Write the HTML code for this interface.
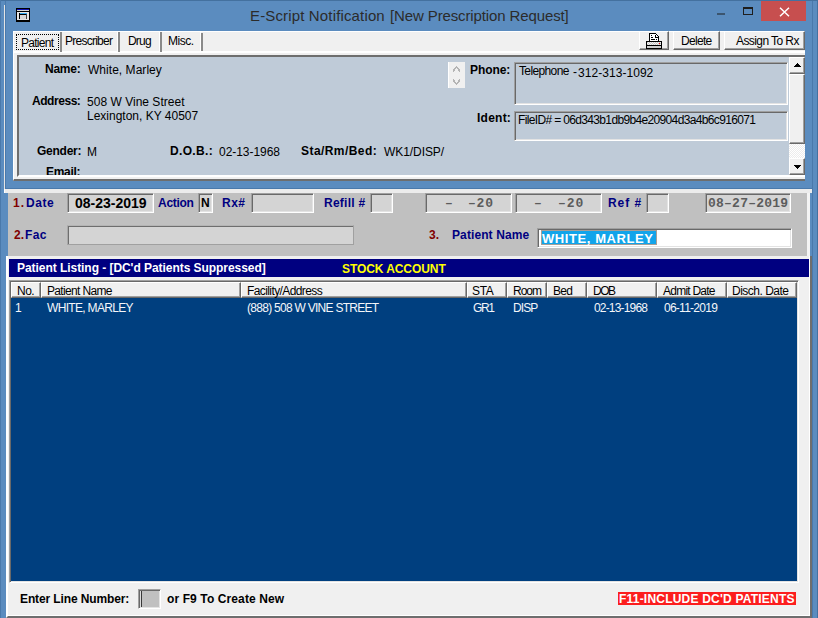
<!DOCTYPE html>
<html><head><meta charset="utf-8">
<style>
*{margin:0;padding:0;box-sizing:border-box}
html,body{width:818px;height:618px;overflow:hidden;background:#5b8cbf;font-family:"Liberation Sans",sans-serif;font-size:11px;color:#000}
.a{position:absolute}
.t{position:absolute;white-space:nowrap;line-height:1}
.b{font-weight:bold}
.p{font-size:12px}
.sunk{position:absolute;border-style:solid;border-width:1px;border-color:#a0a0a0 #fff #fff #a0a0a0;box-shadow:inset 1px 1px 0 #696969,inset -1px -1px 0 #e3e3e3}
.btn{position:absolute;background:#f0f0f0;border:1px solid;border-color:#fff #696969 #696969 #fff;box-shadow:inset -1px -1px 0 #a0a0a0}
.hd{position:absolute;top:282px;height:16px;background:#f0f0f0;border-style:solid;border-width:1px;border-color:#fff #696969 #696969 #fff;box-shadow:inset -1px -1px 0 #a0a0a0}
.nv{color:#000080}
.rd{color:#800000}
.mono{font-family:"Liberation Mono",monospace;font-size:13px;color:#5c5c5c;white-space:pre}
.bd{color:#f4f6fa}
</style></head><body>
<!-- main window frame -->
<div class="a" style="left:4px;top:5px;width:1px;height:184px;background:#e4e4e4"></div>

<!-- dialog frame -->
<div class="a" style="left:5px;top:0;width:808px;height:189px;background:#5b8cbf;border:1px solid #4a79ab"></div>
<div class="t" style="left:250px;top:8px;font-size:15px;color:#2b2b2b;letter-spacing:0.15px">E-Script Notification</div>
<div class="t" style="left:390px;top:8px;font-size:15px;color:#2b2b2b;letter-spacing:-0.12px">[New Prescription Request]</div>
<!-- sys icon -->
<svg class="a" style="left:16px;top:8px" width="14" height="14" viewBox="0 0 14 14" shape-rendering="crispEdges">
<rect x="0" y="0" width="14" height="14" fill="#000"/>
<rect x="1" y="1" width="12" height="1" fill="#1010b0"/>
<rect x="1" y="2" width="12" height="1" fill="#d8d8d8"/>
<rect x="1" y="4" width="12" height="8" fill="#e6e6e6"/>
<rect x="3" y="5" width="1" height="6" fill="#000"/>
<rect x="4" y="5" width="7" height="1" fill="#30a8f0"/>
<rect x="4" y="6" width="7" height="1" fill="#000"/>
<rect x="4" y="7" width="6" height="4" fill="#d8d8d8"/>
<rect x="10" y="6" width="1" height="5" fill="#404040"/>
</svg>
<!-- min/max/close -->
<div class="a" style="left:717px;top:13px;width:8px;height:2px;background:#3b556f"></div>
<div class="a" style="left:743px;top:7px;width:10px;height:8px;border:1px solid #1e1e1e;border-top-width:2px"></div>
<div class="a" style="left:761px;top:1px;width:45px;height:20px;background:#c74f4f"></div>
<svg class="a" style="left:779px;top:7px" width="11" height="10" viewBox="0 0 11 10"><path d="M1 0.8 L10 9.2 M10 0.8 L1 9.2" stroke="#fff" stroke-width="1.5"/></svg>

<!-- dialog client -->
<div class="a" style="left:13px;top:31px;width:792px;height:150px;background:#f0f0f0;border-top:1px solid #fff;border-left:1px solid #fff;border-bottom:2px solid #6e6e6e"></div>
<div class="a" style="left:14px;top:51px;width:791px;height:2px;background:#fff"></div>

<!-- tabs -->
<div class="a" style="left:16px;top:34px;width:43px;height:16px;border:1px dotted #000"></div>
<div class="t" style="left:21px;top:37px;letter-spacing:-0.73px;font-size:12px">Patient</div>
<div class="a" style="left:60px;top:32px;width:2px;height:20px;background:#8a8a8a"></div>
<div class="t" style="left:65px;top:35px;letter-spacing:-0.75px;font-size:12px">Prescriber</div>
<div class="a" style="left:117px;top:32px;width:1px;height:20px;background:#fff"></div>
<div class="a" style="left:118px;top:32px;width:2px;height:20px;background:#8a8a8a"></div>
<div class="t" style="left:128px;top:35px;letter-spacing:-0.80px;font-size:12px">Drug</div>
<div class="a" style="left:159px;top:32px;width:1px;height:20px;background:#fff"></div>
<div class="a" style="left:160px;top:32px;width:2px;height:20px;background:#8a8a8a"></div>
<div class="t" style="left:168px;top:35px;letter-spacing:-0.50px;font-size:12px">Misc.</div>
<div class="a" style="left:200px;top:32px;width:1px;height:20px;background:#fff"></div>
<div class="a" style="left:201px;top:33px;width:2px;height:18px;background:#8a8a8a"></div>

<!-- toolbar buttons -->
<div class="btn" style="left:639px;top:31px;width:30px;height:19px"></div>
<svg class="a" style="left:646px;top:33px" width="16" height="16" viewBox="0 0 16 16" shape-rendering="crispEdges"><rect x="4" y="1" width="6" height="7" fill="#fff"/><rect x="10" y="2" width="1" height="6" fill="#fff"/><rect x="11" y="4" width="1" height="4" fill="#fff"/><rect x="9" y="1" width="1" height="1" fill="#fff"/><rect x="3" y="0" width="7" height="1" fill="#000"/><rect x="3" y="0" width="1" height="8" fill="#000"/><rect x="10" y="1" width="1" height="1" fill="#000"/><rect x="11" y="2" width="1" height="1" fill="#000"/><rect x="12" y="3" width="1" height="5" fill="#000"/><rect x="9" y="2" width="1" height="3" fill="#000"/><rect x="10" y="4" width="2" height="1" fill="#000"/><rect x="5" y="2" width="1" height="1" fill="#000"/><rect x="5" y="4" width="2" height="1" fill="#000"/><rect x="5" y="6" width="4" height="1" fill="#000"/><rect x="10" y="6" width="1" height="1" fill="#000"/><rect x="0" y="8" width="16" height="1" fill="#000"/><rect x="0" y="8" width="1" height="8" fill="#000"/><rect x="15" y="8" width="1" height="8" fill="#000"/><rect x="1" y="9" width="14" height="3" fill="#f4f4f4"/><rect x="1" y="9" width="1" height="1" fill="#c8c8c8"/><rect x="3" y="9" width="1" height="1" fill="#c8c8c8"/><rect x="5" y="9" width="1" height="1" fill="#c8c8c8"/><rect x="7" y="9" width="1" height="1" fill="#c8c8c8"/><rect x="9" y="9" width="1" height="1" fill="#c8c8c8"/><rect x="11" y="9" width="1" height="1" fill="#c8c8c8"/><rect x="13" y="9" width="1" height="1" fill="#c8c8c8"/><rect x="2" y="10" width="1" height="1" fill="#c8c8c8"/><rect x="4" y="10" width="1" height="1" fill="#c8c8c8"/><rect x="6" y="10" width="1" height="1" fill="#c8c8c8"/><rect x="8" y="10" width="1" height="1" fill="#c8c8c8"/><rect x="10" y="10" width="1" height="1" fill="#c8c8c8"/><rect x="12" y="10" width="1" height="1" fill="#c8c8c8"/><rect x="14" y="10" width="1" height="1" fill="#c8c8c8"/><rect x="1" y="11" width="1" height="1" fill="#c8c8c8"/><rect x="3" y="11" width="1" height="1" fill="#c8c8c8"/><rect x="5" y="11" width="1" height="1" fill="#c8c8c8"/><rect x="7" y="11" width="1" height="1" fill="#c8c8c8"/><rect x="9" y="11" width="1" height="1" fill="#c8c8c8"/><rect x="11" y="11" width="1" height="1" fill="#c8c8c8"/><rect x="13" y="11" width="1" height="1" fill="#c8c8c8"/><rect x="13" y="10" width="1" height="1" fill="#f00"/><rect x="0" y="12" width="16" height="1" fill="#000"/><rect x="1" y="13" width="14" height="2" fill="#d0d0d0"/><rect x="1" y="15" width="14" height="1" fill="#000"/></svg>
<div class="btn" style="left:673px;top:31px;width:47px;height:19px"></div>
<div class="t" style="left:681px;top:35px;letter-spacing:-0.68px;font-size:12px">Delete</div>
<div class="btn" style="left:724px;top:31px;width:81px;height:19px"></div>
<div class="t" style="left:736px;top:35px;letter-spacing:-0.58px;font-size:12px">Assign To Rx</div>

<!-- panel -->
<div class="a" style="left:17px;top:55px;width:788px;height:122px;background:#bfcbd8;border-top:2px solid #6e6e6e;border-left:2px solid #6e6e6e;border-bottom:2px solid #fff"></div>
<div class="t b p" style="left:45px;top:63px;letter-spacing:-0.25px">Name:</div>
<div class="t p" style="left:88px;top:64px;letter-spacing:0.04px">White, Marley</div>
<div class="t b p" style="left:32px;top:95px;letter-spacing:-0.45px">Address:</div>
<div class="t p" style="left:87px;top:96px;letter-spacing:0.02px">508 W Vine Street</div>
<div class="t p" style="left:87px;top:110px;letter-spacing:0.00px">Lexington, KY 40507</div>
<div class="t b p" style="left:37px;top:145px;letter-spacing:-0.26px">Gender:</div>
<div class="t p" style="left:87px;top:146px;letter-spacing:0px">M</div>
<div class="t b p" style="left:170px;top:145px;letter-spacing:0.33px">D.O.B.:</div>
<div class="t p" style="left:219px;top:146px;letter-spacing:-0.04px">02-13-1968</div>
<div class="t b p" style="left:301px;top:145px;letter-spacing:0.44px">Sta/Rm/Bed:</div>
<div class="t p" style="left:384px;top:146px;letter-spacing:-0.07px">WK1/DISP/</div>
<div class="a" style="left:19px;top:57px;width:770px;height:118px;overflow:hidden">
<div class="t b p" style="left:27px;top:109px;letter-spacing:-0.32px">Email:</div>
</div>
<!-- spinner -->
<div class="a" style="left:448px;top:62px;width:17px;height:26px;background:#f0f0f0;border-left:1px solid #fff"></div>
<svg class="a" style="left:453px;top:66px" width="7" height="19" viewBox="0 0 7 19" shape-rendering="crispEdges" fill="#b4b4b4"><rect x="3" y="0" width="1" height="1"/><rect x="2" y="1" width="1" height="1"/><rect x="3" y="1" width="1" height="1"/><rect x="4" y="1" width="1" height="1"/><rect x="1" y="2" width="1" height="1"/><rect x="2" y="2" width="1" height="1"/><rect x="4" y="2" width="1" height="1"/><rect x="5" y="2" width="1" height="1"/><rect x="0" y="3" width="1" height="1"/><rect x="1" y="3" width="1" height="1"/><rect x="5" y="3" width="1" height="1"/><rect x="6" y="3" width="1" height="1"/><rect x="0" y="4" width="1" height="1"/><rect x="1" y="4" width="1" height="1"/><rect x="5" y="4" width="1" height="1"/><rect x="6" y="4" width="1" height="1"/><rect x="0" y="5" width="1" height="1"/><rect x="6" y="5" width="1" height="1"/><rect x="0" y="13" width="1" height="1"/><rect x="6" y="13" width="1" height="1"/><rect x="0" y="14" width="1" height="1"/><rect x="1" y="14" width="1" height="1"/><rect x="5" y="14" width="1" height="1"/><rect x="6" y="14" width="1" height="1"/><rect x="0" y="15" width="1" height="1"/><rect x="1" y="15" width="1" height="1"/><rect x="5" y="15" width="1" height="1"/><rect x="6" y="15" width="1" height="1"/><rect x="1" y="16" width="1" height="1"/><rect x="2" y="16" width="1" height="1"/><rect x="4" y="16" width="1" height="1"/><rect x="5" y="16" width="1" height="1"/><rect x="2" y="17" width="1" height="1"/><rect x="3" y="17" width="1" height="1"/><rect x="4" y="17" width="1" height="1"/><rect x="3" y="18" width="1" height="1"/></svg>
<div class="t b p" style="left:470px;top:64px;letter-spacing:-0.08px">Phone:</div>
<div class="sunk" style="left:514px;top:62px;width:274px;height:43px"></div>
<div class="t" style="left:519px;top:65px;letter-spacing:-0.63px;font-size:12px">Telephone</div>
<div class="t" style="left:573px;top:66px;font-size:12px;letter-spacing:0px">-</div>
<div class="t p" style="left:578px;top:67px;letter-spacing:0.05px">312-313-1092</div>
<div class="t b p" style="left:477px;top:112px;letter-spacing:0.24px">Ident:</div>
<div class="sunk" style="left:514px;top:111px;width:274px;height:30px"></div>
<div class="t" style="left:518px;top:114px;letter-spacing:-0.65px;font-size:12px">FileID# = 06d343b1db9b4e20904d3a4b6c916071</div>
<!-- scrollbar -->
<div class="a" style="left:789px;top:57px;width:16px;height:118px;background:#f0f0f0;border-left:1px solid #fff"></div>
<div class="btn" style="left:789px;top:57px;width:16px;height:17px"></div>
<svg class="a" style="left:794px;top:63px" width="7" height="4" viewBox="0 0 7 4" shape-rendering="crispEdges"><path d="M3 0h1v1h1v1h1v1h1v1H0V3h1V2h1V1h1z" fill="#000"/></svg>
<div class="btn" style="left:789px;top:74px;width:16px;height:70px"></div>
<div class="a" style="left:789px;top:144px;width:16px;height:14px;background:repeating-conic-gradient(#fff 0 25%,#ececec 0 50%) 0 0/2px 2px"></div>
<div class="btn" style="left:789px;top:158px;width:16px;height:17px"></div>
<svg class="a" style="left:794px;top:165px" width="7" height="4" viewBox="0 0 7 4" shape-rendering="crispEdges"><path d="M0 0h7v1H6v1H5v1H4v1H3V3H2V2H1V1H0z" fill="#000"/></svg>

<!-- light band -->
<div class="a" style="left:4px;top:189px;width:808px;height:4px;background:#ececec;border-left:1px solid #fff"></div>
<!-- form area -->
<div class="a" style="left:0;top:193px;width:8px;height:63px;background:#5b8cbf"></div>
<div class="a" style="left:8px;top:193px;width:799px;height:63px;background:#c0c0c0"></div>
<div class="a" style="left:807px;top:193px;width:3px;height:63px;background:#f4f4f4"></div>

<div class="t b p rd" style="left:13px;top:197px;letter-spacing:1.00px">1.</div>
<div class="t b p nv" style="left:26px;top:197px;letter-spacing:0.53px">Date</div>
<div class="sunk" style="left:67px;top:193px;width:87px;height:20px;background:#d4d4d4"></div>
<div class="t b" style="left:75px;top:196px;font-size:14px;letter-spacing:0.00px">08-23-2019</div>
<div class="t b p nv" style="left:158px;top:197px;letter-spacing:-0.28px">Action</div>
<div class="sunk" style="left:198px;top:193px;width:15px;height:20px;background:#d4d4d4"></div>
<div class="t b p" style="left:201px;top:197px;letter-spacing:0px">N</div>
<div class="t b p nv" style="left:222px;top:197px;letter-spacing:0.50px">Rx#</div>
<div class="sunk" style="left:251px;top:193px;width:63px;height:20px;background:#d4d4d4"></div>
<div class="t b p nv" style="left:324px;top:197px;letter-spacing:0.26px">Refill #</div>
<div class="sunk" style="left:370px;top:193px;width:23px;height:20px;background:#d4d4d4"></div>
<div class="sunk" style="left:425px;top:193px;width:87px;height:20px;background:#d4d4d4"></div>
<div class="t b mono" style="left:445px;top:197px;letter-spacing:0px">–</div>
<div class="t b mono" style="left:468px;top:197px;letter-spacing:0.80px">–20</div>
<div class="sunk" style="left:515px;top:193px;width:87px;height:20px;background:#d4d4d4"></div>
<div class="t b mono" style="left:534px;top:197px;letter-spacing:0px">–</div>
<div class="t b mono" style="left:558px;top:197px;letter-spacing:0.90px">–20</div>
<div class="t b p nv" style="left:608px;top:197px;letter-spacing:0.93px">Ref #</div>
<div class="sunk" style="left:646px;top:193px;width:23px;height:20px;background:#d4d4d4"></div>
<div class="sunk" style="left:705px;top:193px;width:86px;height:20px;background:#d4d4d4"></div>
<div class="t b mono" style="left:708px;top:197px;letter-spacing:0.24px">08–27–2019</div>

<div class="t b p rd" style="left:14px;top:229px;letter-spacing:0.00px">2.</div>
<div class="t b p nv" style="left:25px;top:229px;letter-spacing:0.40px">Fac</div>
<div class="a" style="left:67px;top:225px;width:287px;height:20px;background:#d4d4d4;border-style:solid;border-width:1px;border-color:#b4b4b4 #a0a0a0 #a0a0a0 #a8a8a8;box-shadow:inset 1px 1px 0 #6e6e6e"></div>
<div class="t b p rd" style="left:429px;top:229px;letter-spacing:0.20px">3.</div>
<div class="t b p nv" style="left:452px;top:229px;letter-spacing:0.10px">Patient Name</div>
<div class="sunk" style="left:537px;top:228px;width:255px;height:20px;background:#fff"></div>
<div class="a" style="left:541px;top:230px;width:116px;height:15px;background:#12a4ea;border:1px solid #a89e96"></div>
<div class="t b" style="left:542px;top:232px;font-size:13px;color:#fff;letter-spacing:0.58px">WHITE, MARLEY</div>

<!-- listing area -->
<div class="a" style="left:6px;top:256px;width:806px;height:362px;background:#f0f0f0;border-left:2px solid #fff;border-right:2px solid #6e6e6e;border-bottom:2px solid #6e6e6e"></div>
<div class="a" style="left:809px;top:256px;width:1px;height:360px;background:#fff"></div>
<div class="a" style="left:8px;top:615px;width:802px;height:1px;background:#fff"></div>
<div class="a" style="left:9px;top:259px;width:800px;height:18px;background:#000080"></div>
<div class="t b p" style="left:17px;top:262px;color:#fff;letter-spacing:-0.05px">Patient Listing - [DC'd Patients Suppressed]</div>
<div class="t b p" style="left:342px;top:263px;color:#ffff00;letter-spacing:-0.08px">STOCK ACCOUNT</div>

<!-- table -->
<div class="a" style="left:9px;top:280px;width:790px;height:303px;border-style:solid;border-width:1px;border-color:#a0a0a0 #fff #fff #a0a0a0;box-shadow:inset 1px 1px 0 #696969,inset -1px -1px 0 #e3e3e3"></div>
<div class="a" style="left:11px;top:298px;width:786px;height:283px;background:#003f7f"></div>
<div class="a" style="left:11px;top:282px;width:786px;height:16px;background:#f0f0f0"></div>
<div class="hd" style="left:11px;width:30px"></div>
<div class="hd" style="left:41px;width:200px"></div>
<div class="hd" style="left:241px;width:226px"></div>
<div class="hd" style="left:467px;width:40px"></div>
<div class="hd" style="left:507px;width:40px"></div>
<div class="hd" style="left:547px;width:40px"></div>
<div class="hd" style="left:587px;width:70px"></div>
<div class="hd" style="left:657px;width:70px"></div>
<div class="hd" style="left:727px;width:70px"></div>
<div class="t" style="left:17px;top:285px;letter-spacing:-0.50px;font-size:12px">No.</div>
<div class="t" style="left:47px;top:285px;letter-spacing:-0.66px;font-size:12px">Patient Name</div>
<div class="t" style="left:247px;top:285px;letter-spacing:-0.60px;font-size:12px">Facility/Address</div>
<div class="t" style="left:472px;top:285px;letter-spacing:-0.30px;font-size:12px">STA</div>
<div class="t" style="left:513px;top:285px;letter-spacing:-1.00px;font-size:12px">Room</div>
<div class="t" style="left:553px;top:285px;letter-spacing:-0.70px;font-size:12px">Bed</div>
<div class="t" style="left:593px;top:285px;font-size:12px;letter-spacing:-1.50px">DOB</div>
<div class="t" style="left:663px;top:285px;letter-spacing:-0.76px;font-size:12px">Admit Date</div>
<div class="t" style="left:732px;top:285px;letter-spacing:-0.50px;font-size:12px">Disch. Date</div>

<div class="t bd" style="left:15px;top:302px;font-size:12px;letter-spacing:0px">1</div>
<div class="t bd" style="left:47px;top:302px;letter-spacing:-0.68px;font-size:12px">WHITE, MARLEY</div>
<div class="t bd" style="left:247px;top:302px;letter-spacing:-0.72px;font-size:12px">(888) 508 W VINE STREET</div>
<div class="t bd" style="left:473px;top:302px;letter-spacing:-1.40px;font-size:12px">GR1</div>
<div class="t bd" style="left:513px;top:302px;letter-spacing:-0.93px;font-size:12px">DISP</div>
<div class="t bd" style="left:594px;top:302px;letter-spacing:-0.83px;font-size:12px">02-13-1968</div>
<div class="t bd" style="left:664px;top:302px;letter-spacing:-0.74px;font-size:12px">06-11-2019</div>

<!-- bottom -->
<div class="t b p" style="left:20px;top:593px;letter-spacing:-0.12px">Enter Line Number:</div>
<div class="sunk" style="left:138px;top:589px;width:23px;height:20px;background:#c0c0c0"></div>
<div class="a" style="left:140px;top:591px;width:1px;height:16px;background:#dcdcdc"></div>
<div class="a" style="left:141px;top:591px;width:1px;height:16px;background:#383838"></div>
<div class="t b p" style="left:167px;top:593px;letter-spacing:0.11px">or F9 To Create New</div>
<div class="a" style="left:618px;top:592px;width:178px;height:13px;background:#fc1e1e"></div>
<div class="t b p" style="left:619px;top:593px;color:#fff;letter-spacing:0.21px">F11-INCLUDE DC'D PATIENTS</div>

<!-- right main frame -->
<div class="a" style="left:812px;top:0;width:6px;height:618px;background:#5b8cbf;border-left:1px solid #4a79ab;border-right:1px solid #44719f"></div>
<div class="a" style="left:0;top:0;width:818px;height:1px;background:#44719f"></div>
<div class="a" style="left:0;top:0;width:1px;height:618px;background:#4a79ab"></div>
</body></html>
